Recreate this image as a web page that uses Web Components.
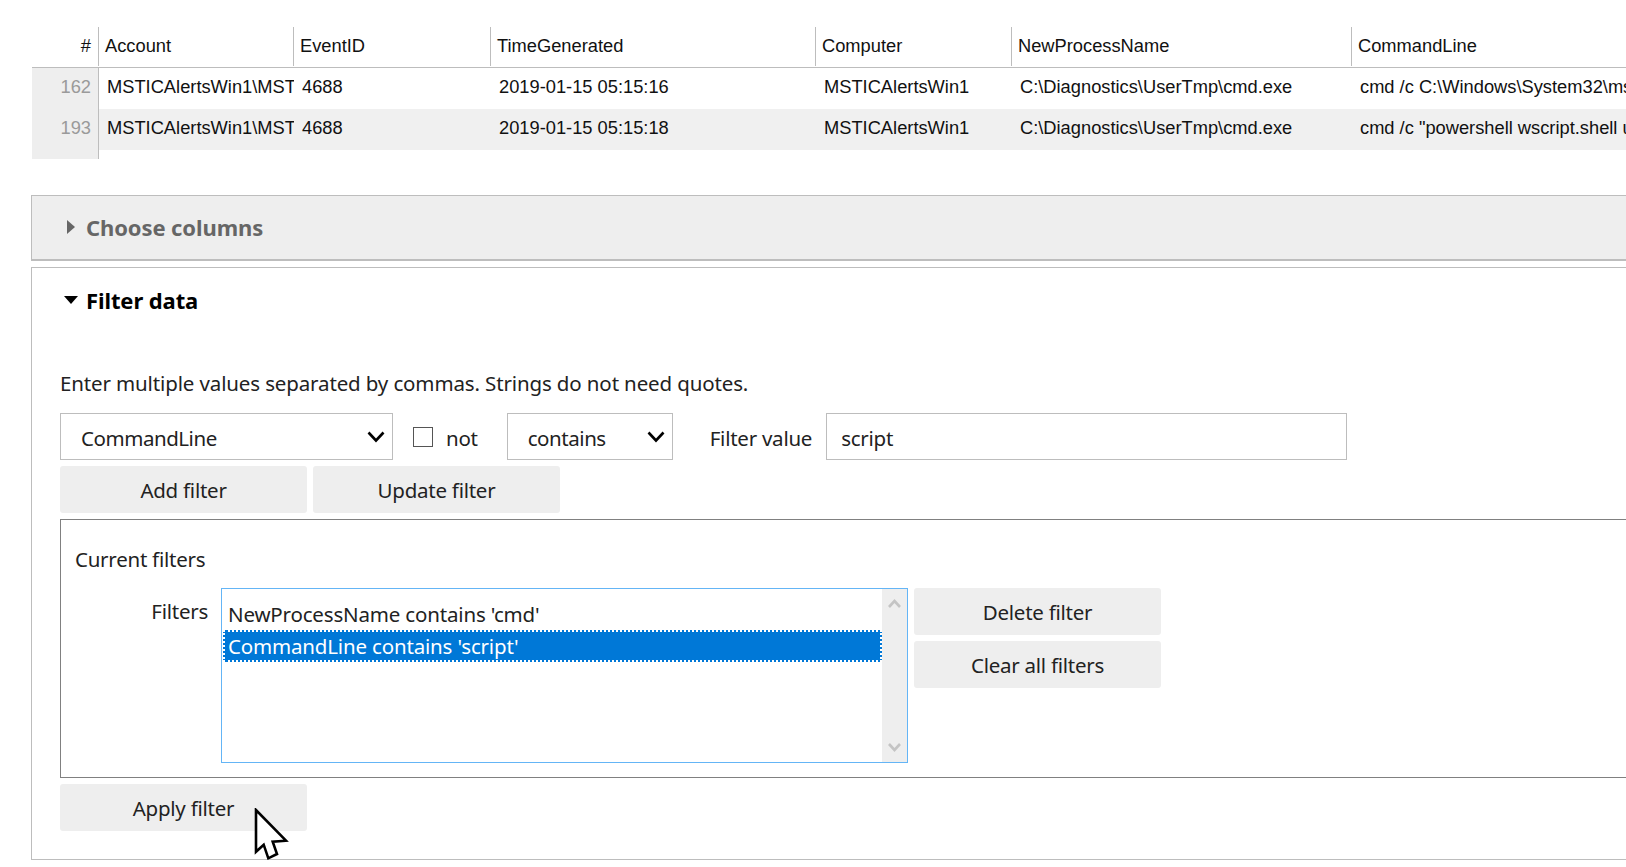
<!DOCTYPE html>
<html>
<head>
<meta charset="utf-8">
<title>Filter data</title>
<style>
  html, body { margin: 0; padding: 0; background: #fff; }
  body { width: 1626px; height: 867px; overflow: hidden; position: relative; }
</style>
</head>
<body>
<event-table></event-table>
<collapse-panel title-text="Choose columns" style="margin-top:36px"></collapse-panel>
<collapse-panel title-text="Filter data" open style="margin-top:6px">
  <filter-form></filter-form>
</collapse-panel>
<mouse-cursor></mouse-cursor>

<script>
const UI_FONT = `"Noto Sans", "Open Sans", sans-serif`;

class EventTable extends HTMLElement {
  constructor() {
    super();
    const columns = [
      ['Account', 195], ['EventID', 197], ['TimeGenerated', 325],
      ['Computer', 196], ['NewProcessName', 340], ['CommandLine', 400]
    ];
    const rows = [
      ['162', 'MSTICAlertsWin1\\MST', '4688', '2019-01-15 05:15:16', 'MSTICAlertsWin1', 'C:\\Diagnostics\\UserTmp\\cmd.exe', 'cmd /c C:\\Windows\\System32\\ms'],
      ['193', 'MSTICAlertsWin1\\MST', '4688', '2019-01-15 05:15:18', 'MSTICAlertsWin1', 'C:\\Diagnostics\\UserTmp\\cmd.exe', 'cmd /c "powershell wscript.shell u']
    ];
    const grid = columns.map( c => `${c[1]}px` ).join( ' ' );
    this.attachShadow( {mode: 'open'} );
    this.shadowRoot.innerHTML = `
      <style>
        :host {
          display: block;
          box-sizing: border-box;
          font-family: "Liberation Sans", Arial, sans-serif;
          font-size: 18.3px;
          color: #111;
          margin: 27px 0 0 32px;
          width: 1700px;
        }
        .row {
          display: grid;
          grid-template-columns: 67px ${grid};
          height: 41px;
          align-items: stretch;
        }
        .row > div {
          box-sizing: border-box;
          white-space: nowrap;
          overflow: hidden;
          line-height: 38px;
          padding-left: 8px;
        }
        .head { height: 40px; border-bottom: 1px solid #bdbdbd; }
        .head > div { border-right: 1px solid #bdbdbd; line-height: 37px; padding-left: 6px; height: 39px; }
        .head > div:first-child { text-align: right; padding: 0 7px 0 0; }
        .head > div:last-child { border-right: none; }
        .row > .num {
          background: #eeeeee;
          color: #9a9a9a;
          text-align: right;
          border-right: 1px solid #bdbdbd;
          padding: 0 7px 0 0;
        }
        .odd { background: #f0f0f0; }
        .tail { height: 9px; display: grid; grid-template-columns: 67px; }
        .tail > div { background: #eeeeee; border-right: 1px solid #bdbdbd; }
      </style>
      <div class="row head">
        <div>#</div>${columns.map( c => `<div>${c[0]}</div>` ).join( '' )}
      </div>
      ${rows.map( ( r, i ) => `
        <div class="row ${i % 2 ? 'odd' : ''}">
          <div class="num">${r[0]}</div>${r.slice( 1 ).map( v => `<div>${v}</div>` ).join( '' )}
        </div>` ).join( '' )}
      <div class="tail"><div></div></div>
    `;
  }
}
customElements.define( 'event-table', EventTable );

class CollapsePanel extends HTMLElement {
  constructor() {
    super();
    this.attachShadow( {mode: 'open'} );
    const open = this.hasAttribute( 'open' );
    const arrow = open
      ? '<svg width="14" height="8" viewBox="0 0 14 8"><path d="M0 0H14L7 8Z" fill="#000"/></svg>'
      : '<svg width="8" height="14" viewBox="0 0 8 14"><path d="M0 0V14L8 7Z" fill="#666"/></svg>';
    this.shadowRoot.innerHTML = `
      <style>
        :host {
          display: block;
          box-sizing: border-box;
          margin-left: 31px;
          width: 1700px;
          border: 1px solid #bdbdbd;
          font-family: ${UI_FONT};
          background: ${open ? '#fff' : '#eeeeee'};
          color: ${open ? '#000' : '#666'};
          ${open ? 'height: 593px;' : 'height: 66px; border-bottom-width: 2px;'}
        }
        header {
          display: flex;
          align-items: center;
          gap: ${open ? '8px' : '11px'};
          height: ${open ? '64px' : '62px'};
          padding-left: ${open ? '32px' : '35px'};
          font-size: 22px;
          font-weight: 700;
          letter-spacing: -0.1px;
        }
      </style>
      <header>${arrow}<span>${this.getAttribute( 'title-text' )}</span></header>
      <slot></slot>
    `;
  }
}
customElements.define( 'collapse-panel', CollapsePanel );

class UiButton extends HTMLElement {
  constructor() {
    super();
    this.attachShadow( {mode: 'open'} );
    this.shadowRoot.innerHTML = `
      <style>
        :host {
          display: flex;
          box-sizing: border-box;
          width: 247px;
          height: 47px;
          align-items: center;
          justify-content: center;
          background: #eeeeee;
          border-radius: 3px;
          font-size: 20.5px;
          color: #222;
          letter-spacing: -0.25px;
        }
      </style>
      <slot></slot>
    `;
  }
}
customElements.define( 'ui-button', UiButton );

class UiSelect extends HTMLElement {
  constructor() {
    super();
    this.attachShadow( {mode: 'open'} );
    this.shadowRoot.innerHTML = `
      <style>
        :host {
          display: flex;
          box-sizing: border-box;
          height: 47px;
          align-items: center;
          justify-content: space-between;
          border: 1px solid #bdbdbd;
          padding: 0 7px 0 20px;
          font-size: 20.5px;
          color: #222;
          letter-spacing: -0.45px;
        }
        span { padding-top: 2px; }
        svg { display: block; }
      </style>
      <span><slot></slot></span>
      <svg width="18" height="12" viewBox="0 0 18 12"><path d="M1.5 1.5L9 9.5L16.5 1.5" fill="none" stroke="#000" stroke-width="2.6"/></svg>
    `;
  }
}
customElements.define( 'ui-select', UiSelect );

class FilterList extends HTMLElement {
  constructor() {
    super();
    this.attachShadow( {mode: 'open'} );
    this.shadowRoot.innerHTML = `
      <style>
        :host {
          display: flex;
          box-sizing: border-box;
          width: 687px;
          height: 175px;
          border: 1px solid #64b5f6;
          font-size: 20.5px;
          letter-spacing: -0.17px;
          color: #222;
        }
        .items { flex: 1; padding: 10px 0 0 1px; }
        .item { height: 31px; line-height: 31px; padding-left: 5px; box-sizing: border-box; }
        .sel {
          background: #0078d7;
          color: #fff;
          outline: 2px dotted #fff;
          outline-offset: -2px;
          height: 32px;
          line-height: 32px;
        }
        .bar {
          width: 25px;
          background: #eeeeee;
          display: flex;
          flex-direction: column;
          justify-content: space-between;
          align-items: center;
          padding: 10px 0;
          box-sizing: border-box;
        }
        svg { display: block; }
      </style>
      <div class="items">
        <div class="item">NewProcessName contains 'cmd'</div>
        <div class="item sel">CommandLine contains 'script'</div>
      </div>
      <div class="bar">
        <svg width="13" height="10" viewBox="0 0 13 10"><path d="M1 8L6.5 2L12 8" fill="none" stroke="#c4c4c4" stroke-width="2.6"/></svg>
        <svg width="13" height="10" viewBox="0 0 13 10"><path d="M1 2L6.5 8L12 2" fill="none" stroke="#c4c4c4" stroke-width="2.6"/></svg>
      </div>
    `;
  }
}
customElements.define( 'filter-list', FilterList );

class FilterForm extends HTMLElement {
  constructor() {
    super();
    this.attachShadow( {mode: 'open'} );
    this.shadowRoot.innerHTML = `
      <style>
        :host {
          display: block;
          box-sizing: border-box;
          padding: 35px 0 0 28px;
          font-size: 20.5px;
          letter-spacing: -0.25px;
          color: #222;
        }
        .hint { height: 32px; line-height: 32px; margin-bottom: 14px; letter-spacing: -0.13px; }
        .controls { display: flex; align-items: center; height: 47px; }
        .controls > span { padding-top: 3px; }
        .check {
          width: 20px; height: 20px;
          border: 1px solid #555;
          box-sizing: border-box;
          margin: 0 13px 0 20px;
        }
        .value {
          box-sizing: border-box;
          width: 521px;
          height: 47px;
          line-height: 48px;
          border: 1px solid #bdbdbd;
          padding-left: 14px;
          margin-left: 1px;
        }
        .btns { display: flex; gap: 6px; margin-top: 6px; }
        .current {
          box-sizing: border-box;
          width: 1700px;
          height: 259px;
          border: 1px solid #808080;
          margin-top: 6px;
          padding: 23px 0 0 14px;
        }
        .current .cap { height: 32px; line-height: 32px; margin-bottom: 13px; }
        .filters { display: flex; }
        .lbl { width: 133px; text-align: right; line-height: 47px; margin-right: 13px; height: 47px; }
        .side { display: flex; flex-direction: column; gap: 6px; margin-left: 6px; }
        .apply { margin-top: 6px; }
      </style>
      <div class="hint">Enter multiple values separated by commas. Strings do not need quotes.</div>
      <div class="controls">
        <ui-select style="width:333px">CommandLine</ui-select>
        <div class="check"></div>
        <span>not</span>
        <ui-select style="width:166px;margin-left:29px">contains</ui-select>
        <span style="margin:0 13px 0 37px">Filter value</span>
        <div class="value">script</div>
      </div>
      <div class="btns">
        <ui-button>Add filter</ui-button>
        <ui-button>Update filter</ui-button>
      </div>
      <div class="current">
        <div class="cap">Current filters</div>
        <div class="filters">
          <div class="lbl">Filters</div>
          <filter-list></filter-list>
          <div class="side">
            <ui-button>Delete filter</ui-button>
            <ui-button>Clear all filters</ui-button>
          </div>
        </div>
      </div>
      <ui-button class="apply">Apply filter</ui-button>
    `;
  }
}
customElements.define( 'filter-form', FilterForm );

class MouseCursor extends HTMLElement {
  constructor() {
    super();
    this.attachShadow( {mode: 'open'} );
    this.shadowRoot.innerHTML = `
      <style>
        :host { position: absolute; left: 254px; top: 808px; width: 36px; height: 54px; }
        svg { display: block; }
      </style>
      <svg width="36" height="54" viewBox="0 0 36 54">
        <path d="M2 2V43.7L9.7 36.7L14.3 50.3L23 46L18.7 33.7L32 32.7Z" fill="#fff" stroke="#000" stroke-width="2.6" stroke-linejoin="miter"/>
      </svg>
    `;
  }
}
customElements.define( 'mouse-cursor', MouseCursor );
</script>
</body>
</html>
